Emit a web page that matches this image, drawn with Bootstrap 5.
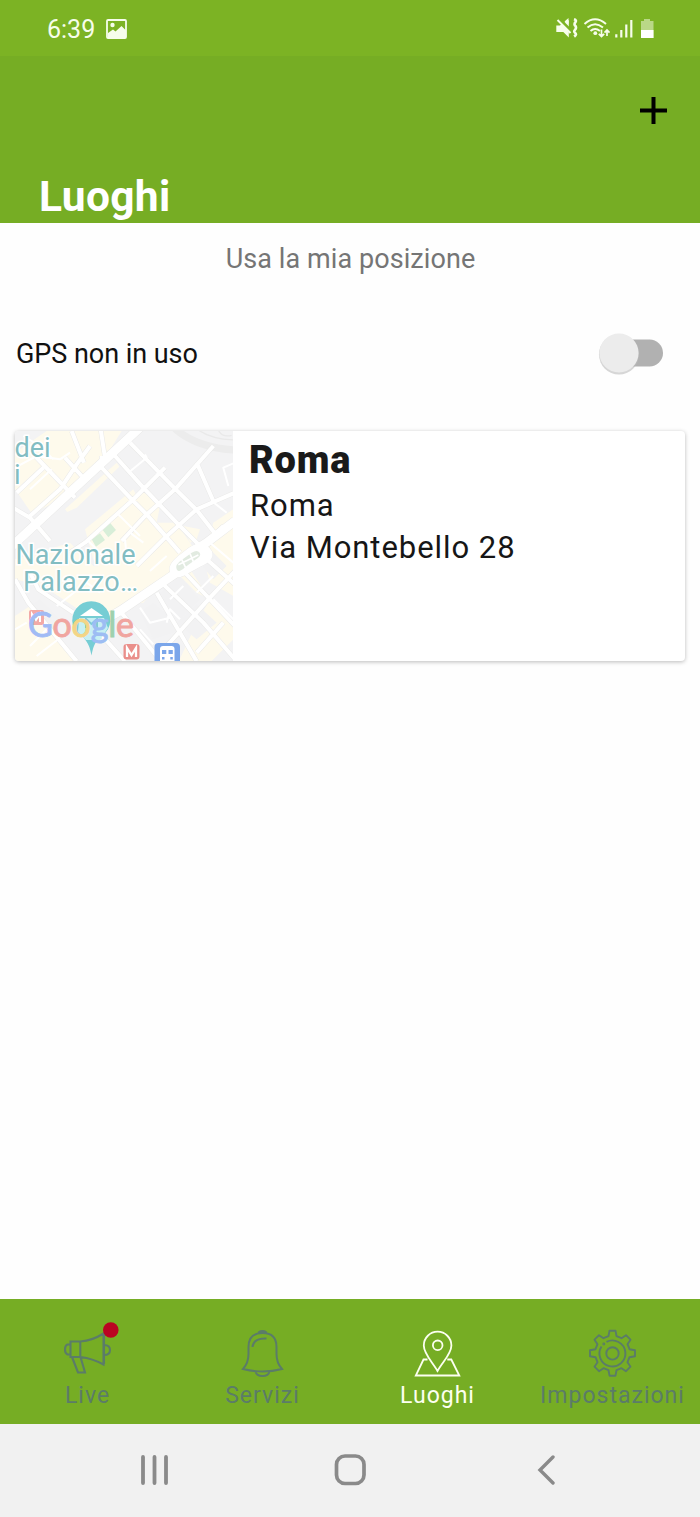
<!DOCTYPE html>
<html lang="it">
<head>
<meta charset="utf-8">
<meta name="viewport" content="width=device-width, initial-scale=1">
<title>Luoghi</title>
<link href="https://cdn.jsdelivr.net/npm/bootstrap@5.3.0/dist/css/bootstrap.min.css" rel="stylesheet">
<style>
  body{font-family:Roboto,"Liberation Sans",sans-serif;background:#fefefe;color:#111;line-height:1}
  svg{display:block;flex:none}
  .screen{height:1517px;overflow:hidden}
  .status{height:56px;background:#7cb324;color:#f6fdeb;padding:2px 46px 0 47px;font-size:25px}
  .status .photo{margin-left:11px}
  .topbar{height:167px;background:#76ad24}
  .topbar h1{font-size:42.500px;font-weight:700;color:#fff;margin:0;line-height:50px;padding:0 0 1px 39px;letter-spacing:.3px}
  .plus{margin:41px 33px 0 auto}
  .hint{font-size:27px;color:#757575;line-height:32px;margin-top:20px;letter-spacing:.08px;padding-left:1px}
  .gps{height:60px;margin-top:49px;padding:0 37px 0 16px;font-size:27px;color:#111;letter-spacing:-.05px}
  .toggle{width:64px;height:42px}
  .place{height:230px;margin:47px 15px 0;border:0;border-radius:4px;background:#fff;box-shadow:0 1px 4px rgba(0,0,0,.27);overflow:hidden}
  .place h2{font-size:38px;font-weight:900;line-height:44px;margin:7px 0 3px;color:#1a1a1a;letter-spacing:.75px}
  .place p{font-size:31px;line-height:42px;margin:0;padding-left:1px;letter-spacing:.95px;color:#161616}
  .tabs{height:125px;background:#76ad24}
  .tab-item{width:175px;color:#5b7c68;text-decoration:none;font-size:23px;letter-spacing:1px;padding-top:23px;white-space:nowrap}
  .tab-item.active{color:#fcfff0}
  .tab-item span{line-height:28px}
  .tab-item svg{margin-right:2px}
  .sysbar{height:93px;background:#f1f1f1;padding:0 145px 2px 140px}
  .sysbar .home{margin-right:6px}
</style>
</head>
<body>
<div class="screen d-flex flex-column">
  <div class="status d-flex align-items-center">
    <span>6:39</span>
    <svg class="photo" width="21" height="20" viewBox="0 0 21 20"><rect x="1" y="1" width="19" height="18" rx="1" fill="none" stroke="#f6fdeb" stroke-width="1.800"/><circle cx="6.500" cy="6" r="2.200" fill="#f6fdeb"/><path d="M2 14l5-3.500 2.500 2 6-5.500 4.500 4.500V19H2z" fill="#f6fdeb"/></svg>
    <svg class="ms-auto" width="99" height="22" viewBox="555 18 99 22" fill="none" stroke="#f6fdeb">
      <path d="M556.3 25.500h3.500l9-5.500v17.500l-5.500-5.500h-7z" fill="#f6fdeb" stroke="none"/>
      <path d="M558 18l12 12" stroke="#7cb324" stroke-width="3.400"/><path d="M557.500 20l13 13" stroke-width="2"/>
      <path d="M564.500 21.500l4-3.500v6z" fill="#f6fdeb" stroke="none"/>
      <path d="M574 19.200q3 1 1.300 3.200t.2 3.600q1.200 2-.5 3.800t.2 3.200-1 3.600" stroke-width="2.600"/>
      <path d="M584.500 24q10.500-9.500 21.500 0M587.500 27.500q7.500-6.500 15.500 0M590.500 31q4.500-4 9.500 0" stroke-width="2"/><circle cx="595.300" cy="33.200" r="1.900" fill="#f6fdeb" stroke="none"/>
      <path d="M601.500 29.500v7m-2.700-2.700l2.700 2.700 2.700-2.700M607 36v-6m-2.500 2.600l2.500-2.600 2.500 2.600" stroke-width="1.700"/>
      <path d="M616.300 34.200V37.500M621.300 30V37.500M626.300 24.500V37.500M631.300 20V37.500" stroke-width="2.200"/>
      <path d="M641 21h3v-2h6v2h3.500v17H641z" fill="#bad887" stroke="none"/><path d="M641 30h12.500v8H641z" fill="#fff" stroke="none"/>
    </svg>
  </div>
  <header class="topbar d-flex flex-column">
    <svg class="plus" width="27" height="27" viewBox="0 0 27 27"><path d="M13.500 0v27M0 13.500h27" stroke="#000" stroke-width="4"/></svg>
    <h1 class="mt-auto">Luoghi</h1>
  </header>
  <main class="flex-grow-1">
    <div class="hint text-center">Usa la mia posizione</div>
    <div class="gps d-flex align-items-center justify-content-between">
      <span>GPS non in uso</span>
      <svg class="toggle overflow-visible" viewBox="0 0 64 42"><rect x="14" y="6.500" width="50" height="27" rx="13.500" fill="#b1b1b1"/><circle cx="20" cy="21.500" r="20" fill="#bbb" opacity=".6"/><circle cx="20" cy="20" r="19.600" fill="#ececec"/></svg>
    </div>
    <div class="place card flex-row">
      <svg width="218" height="230" viewBox="15 431 218 230">
        <rect x="15" y="431" width="218" height="230" fill="#f3f3f4"/>
        <g transform="translate(10 426) scale(.33333)" fill="none" stroke-linejoin="round">
          <g fill="#fefaec">
            <path d="M15 80L110 15H335L285 95 215 150 125 235 65 262 15 190zM165 250L320 110 328 122 200 245 172 258zM225 310L370 190 380 210 400 195 450 240 440 290 500 290 560 380 480 440 400 530 340 540 250 400z"/>
            <path d="M15 400L180 350 250 420 400 430 330 560 220 560 100 480 15 460zM520 300L570 310 560 340 540 350zM610 290L670 250V510L600 470 580 400zM560 590L600 520 670 600V640L590 720H500zM15 570L60 540 150 640 200 706H15zM520 400L600 520 560 500 500 440z"/>
          </g>
          <g fill="#f2f2f3"><path d="M440 510L510 450 570 520 510 580zM500 590L560 535 620 590 560 640zM390 560L430 530 480 575 520 610 430 640zM60 540L90 520 160 590 130 610zM560 400L600 370 650 420 610 460z"/></g>
          <path d="M245 340L270 322 285 342 258 362zM278 312L300 290 318 312 295 334z" fill="#d8eed8"/>
          <path d="M495 8Q560 65 675 72" stroke="#ececec" stroke-width="22"/><path d="M560 8Q600 40 675 42M625 12Q635 35 665 28" stroke="#e9e9e9" stroke-width="4"/>
          <defs>
            <g id="avenues"><path d="M-10 375L395 0M675 285L590 350 555 372M500 440L330 555 250 600"/></g>
            <g id="streets"><path d="M315 90L400 185 500 290 590 380M360 50L495 188 560 252 625 335M275 90V125L365 220 410 265 510 380M610 60L495 190 405 270 335 345M675 200L560 250 465 335 380 420M465 125L365 225 225 350 180 380M560 110L610 225M0 240L60 275 120 345M75 90L195 215M20 200L100 125M60 270L150 190 200 115 240 60M165 95L215 150M185 15L222 110M272 10L285 95M60 440L85 490 190 560M15 460L55 530 200 706M440 500L560 706M460 475L580 590 675 700M520 435L675 600M590 400L675 475M675 435L600 515 470 660M330 555L440 690M250 600L345 706M560 385L640 300M640 590L560 680"/></g>
          </defs>
          <g stroke="#e9e9e8"><use href="#streets" stroke-width="15"/><use href="#avenues" stroke-width="29"/><path d="M485 438Q475 420 505 395L540 368Q575 345 597 370T570 418L530 440Q500 460 485 438z" stroke-width="10"/></g>
          <g stroke="#fff"><use href="#streets" stroke-width="12"/><use href="#avenues" stroke-width="26"/><path d="M485 438Q475 420 505 395L540 368Q575 345 597 370T570 418L530 440Q500 460 485 438z" fill="#fff" stroke-width="8"/>
            <path stroke-width="6" d="M15 125L80 90 150 100 180 80M130 100L90 60 40 30M60 190L125 130M405 85L410 95 355 140M675 110L640 125 655 180M605 225L650 260M235 345L290 400M325 265L390 330M360 320L400 350M350 390L345 340M420 435L470 390M15 610L50 590M60 660L110 610M80 690L145 640M390 545L420 590 480 575M470 590L480 550 510 580M430 655L390 610M560 500L610 450M520 480L480 520M600 350L670 410M610 520L670 580M140 540L230 470 270 500"/></g>
          <path d="M500 430Q494 416 515 402L545 380Q562 370 569 380T555 402L525 424Q505 443 500 430z" fill="#e2ebe1"/><path d="M515 400L528 427M540 383L550 407M505 416L565 387" stroke="#fff" stroke-width="5"/>
        </g>
        <g fill="#82bdc2" stroke="#fff" stroke-width="3" paint-order="stroke" font-size="27" font-family="Roboto, sans-serif">
          <text x="14.500" y="457" textLength="36">dei</text><text x="14" y="484">i</text>
          <text x="15.500" y="564" textLength="120">Nazionale</text><text x="23" y="591" textLength="115">Palazzo…</text>
        </g>
        <rect x="29" y="610" width="15" height="15" rx="2" fill="#f2aaa6"/><path d="M32 622v-8l4 6 4-6v8" stroke="#fff" stroke-width="2" fill="none"/>
        <path d="M91.500 655.500c-1.500-8-3-12-8-18a19 19 0 1 1 15.500 0c-4.500 6-6 10-7.500 18z" fill="#76cdd4"/>
        <path d="M79 618h25l4 10-8 12H86l-8-8z" fill="#c7f0f3"/><path d="M80 616l11.500-8 11.500 8z" fill="#fff"/><path d="M86 628v-9l5.500 5 5.500-5v9" fill="none" stroke="#81cbd2" stroke-width="2"/>
        <text x="28" y="637" font-family="Lato, sans-serif" font-size="34" stroke-width=".9" textLength="106"><tspan fill="#a1bbf5" stroke="#a1bbf5">G</tspan><tspan fill="#f0a5a0" stroke="#f0a5a0">o</tspan><tspan fill="#f3d586" stroke="#f3d586">o</tspan><tspan fill="#9dbdf3" stroke="#9dbdf3">g</tspan><tspan fill="#9ed1ae" stroke="#9ed1ae">l</tspan><tspan fill="#f0a5a0" stroke="#f0a5a0">e</tspan></text>
        <rect x="123.500" y="644" width="16" height="15.500" rx="3" fill="#ea8f8b"/><path d="M127 657v-9l4.500 7 4.500-7v9" fill="none" stroke="#fff" stroke-width="2.300"/>
        <path d="M154.500 661v-14q0-4 4-4h17.500q4 0 4 4v14z" fill="#7ba6ea"/><path d="M160 661v-12q0-3 3-3h8.500q3 0 3 3v12z" fill="#fff"/><path d="M162 650h4.300v4H162zM168.500 650h4.300v4h-4.300zM162 657h2.500v2.500H162zM170.300 657h2.500v2.500h-2.500z" fill="#7ba6ea"/>
      </svg>
      <div class="ps-3">
        <h2>Roma</h2>
        <p>Roma</p>
        <p>Via Montebello 28</p>
      </div>
    </div>
  </main>
  <nav class="tabs d-flex">
    <a href="#" class="tab-item d-flex flex-column align-items-center">
      <svg class="overflow-visible" width="60" height="60" viewBox="57 1322 60 60" fill="none" stroke="#5b7c68" stroke-width="2.100"><path d="M70.500 1341.500h10q12-1 23-8v31q-11-6-23-7.500h-10zM80.300 1341.500v15.500M70.500 1344.500h-3q-2.500 1-2.500 5t2.500 5h3M104 1345q6 0 6 5t-6 5M72 1357l6 15.500h7l-4.500-15.500M104 1333v31"/><circle cx="110.800" cy="1330" r="7.800" fill="#ba0422" stroke="none"/></svg>
      <span>Live</span></a>
    <a href="#" class="tab-item d-flex flex-column align-items-center">
      <svg width="60" height="60" viewBox="232 1322 60 60" fill="none" stroke="#5b7c68" stroke-width="2"><path d="M243 1369q5.500-6 5.500-15v-7c0-9 5-14 14-14s14 5 14 14v7q0 9 5.500 15-19 5-39 0zM258.500 1333.500q0-2.500 4-2.500t4 2.500M255.500 1371.500q1 4.500 7 4.500t7-4.500M252.500 1347q1-9 14-8.500"/></svg>
      <span>Servizi</span></a>
    <a href="#" class="tab-item active d-flex flex-column align-items-center">
      <svg width="60" height="60" viewBox="407 1322 60 60" fill="none" stroke="#fcfff0" stroke-width="1.800"><path d="M437.500 1371c-5-9-13.700-17-13.700-25.500a13.800 13.800 0 0 1 27.600 0c0 8.500-8.900 16.500-13.900 25.500z"/><circle cx="437.700" cy="1345.300" r="4.800"/><path d="M427.500 1359.500h-4l-7.700 16h43.500l-8-16h-4"/></svg>
      <span>Luoghi</span></a>
    <a href="#" class="tab-item d-flex flex-column align-items-center">
      <svg width="60" height="60" viewBox="582 1322.300 60 60" fill="none" stroke="#5b7c68" stroke-width="1.900" stroke-linejoin="round"><path d="M609.500 1331h6l1 5.500 5 2 4.500-3 4.500 4.500-3 4.500 2 5 5.500 1v6l-5.500 1-2 5 3 4.500-4.500 4.500-4.500-3-5 2-1 5.500h-6l-1-5.500-5-2-4.500 3-4.500-4.500 3-4.500-2-5-5.500-1v-6l5.500-1 2-5-3-4.500 4.500-4.500 4.500 3 5-2z"/><path d="M606.500 1342.200a13 13 0 1 1-5 4.500"/><circle cx="612.500" cy="1353.700" r="6.200"/><circle cx="603.800" cy="1344.300" r=".5"/></svg>
      <span>Impostazioni</span></a>
  </nav>
  <div class="sysbar d-flex align-items-center justify-content-between">
    <svg width="29" height="30" viewBox="0 0 29 30"><path d="M3 2v26M14.500 2v26M26 2v26" stroke="#8a8a8a" stroke-width="3.800" stroke-linecap="round"/></svg>
    <svg class="home" width="32" height="32" viewBox="0 0 32 32"><rect x="2.500" y="2" width="27.500" height="27.500" rx="8.500" fill="none" stroke="#8a8a8a" stroke-width="3.700"/></svg>
    <svg width="18" height="30" viewBox="0 0 18 30"><path d="M16 2L3 15l13 13" fill="none" stroke="#8a8a8a" stroke-width="3.400" stroke-linecap="round"/></svg>
  </div>
</div>
<script src="https://cdn.jsdelivr.net/npm/bootstrap@5.3.0/dist/js/bootstrap.bundle.min.js"></script>
</body>
</html>
